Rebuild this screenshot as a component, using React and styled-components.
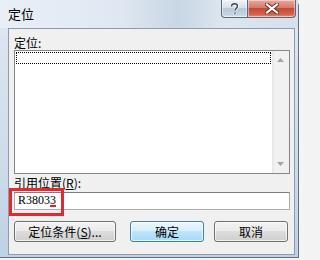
import React from "react";
import styled, { createGlobalStyle } from "styled-components";

const Global = createGlobalStyle`
  html, body { margin: 0; padding: 0; }
  body { background: #f3f3f3; font-family: "Noto Sans CJK SC", "Liberation Sans", sans-serif; }
`;

const Screen = styled.div`
  width: 305px;
  height: 260px;
  overflow: hidden;
  background: #f4f4f4;
`;

const Window = styled.div`
  width: 299px;
  height: 258px;
  box-sizing: border-box;
  border-right: 1px solid #5f6f84;
  border-bottom: 1px solid #5f6f84;
  border-top-right-radius: 6px;
  background: linear-gradient(180deg, #e4ecf5 0%, #dbe5f0 15%, #cfdceb 60%, #bfd1e6 100%);
  display: flex;
  flex-direction: column;
`;

const TitleBar = styled.div`
  height: 28px;
  display: flex;
  align-items: flex-start;
  background: linear-gradient(90deg, #e9eff7 0%, #dfe8f2 40%, #c9d6e4 60%, #dde6f0 75%, #d5e0ec 100%);
`;

const Title = styled.div`
  font-size: 13px;
  line-height: 16px;
  color: #000;
  padding: 6px 0 0 8px;
  flex: 1;
`;

const Captions = styled.div`
  display: flex;
  margin-right: 2px;
`;

const CapBtn = styled.div`
  width: ${(p) => p.$w}px;
  height: 18px;
  box-sizing: border-box;
  border: 1px solid #5b6676;
  border-top: none;
  border-left-width: ${(p) => (p.$first ? 1 : 0)}px;
  border-radius: ${(p) => (p.$first ? "0 0 0 4px" : "0 0 4px 0")};
  background: ${(p) =>
    p.$close
      ? "linear-gradient(180deg, #e9a99a 0%, #d8786a 45%, #c44a36 50%, #d2644e 85%, #e29a7c 100%)"
      : "linear-gradient(180deg, #eef3f8 0%, #d6e0ea 45%, #b9c8d8 50%, #c4d2e0 85%, #d8e3ee 100%)"};
  display: flex;
  align-items: center;
  justify-content: center;
  box-shadow: inset 0 0 0 1px rgba(255, 255, 255, 0.45);
`;

const Client = styled.div`
  position: relative;
  margin-left: 8px;
  width: 287px;
  height: 227px;
  box-sizing: border-box;
  border: 1px solid #8d9bad;
  background: #f0f0f0;
  padding: 0 5px;
  display: flex;
  flex-direction: column;
`;

const Label = styled.div`
  font-size: 12px;
  height: ${(p) => p.$h}px;
  line-height: ${(p) => p.$h}px;
  margin-top: ${(p) => p.$mt}px;
  color: #000;
  white-space: nowrap;
`;

const U = styled.span`
  text-decoration: underline;
  text-underline-offset: 1px;
`;

const ListBox = styled.div`
  width: 276px;
  height: 124px;
  box-sizing: border-box;
  border: 1px solid #828790;
  background: #fff;
  display: flex;
`;

const ListArea = styled.div`
  flex: 1;
  padding: 1px;
`;

const FocusRect = styled.div`
  height: 12px;
  box-sizing: border-box;
  border: 1px dotted #000;
`;

const ScrollBar = styled.div`
  width: 17px;
  background: linear-gradient(90deg, #e6e6e6 0%, #f2f2f2 20%, #f0f0f0 100%);
  display: flex;
  flex-direction: column;
  justify-content: space-between;
  align-items: center;
  padding: 7px 0;
  box-sizing: border-box;
`;

const Input = styled.div`
  width: 276px;
  height: 18px;
  box-sizing: border-box;
  margin-top: 1px;
  border: 1px solid #abadb3;
  border-top-color: #7a7d84;
  background: #fff;
  font-family: "Liberation Serif", "Times New Roman", serif;
  font-size: 12px;
  line-height: 15px;
  padding-left: 3px;
  color: #000;
`;

const Squiggle = styled.span`
  text-decoration: underline;
  text-decoration-color: #e02020;
  text-decoration-thickness: 2px;
  text-underline-offset: 1px;
`;

const Highlight = styled.div`
  position: absolute;
  left: 0;
  top: 159px;
  width: 55px;
  height: 28px;
  box-sizing: border-box;
  border: 3px solid #e5282c;
  pointer-events: none;
`;

const ButtonRow = styled.div`
  display: flex;
  margin-top: 11px;
`;

const Button = styled.div`
  width: ${(p) => p.$w}px;
  height: 21px;
  margin-left: ${(p) => p.$ml || 0}px;
  box-sizing: border-box;
  border: 1px solid ${(p) => (p.$default ? "#3c7fb1" : "#707070")};
  border-radius: 3px;
  background: ${(p) =>
    p.$default
      ? "linear-gradient(180deg, #eaf6fd 0%, #d9f0fc 45%, #bee6fd 50%, #a7d9f5 100%)"
      : "linear-gradient(180deg, #f2f2f2 0%, #ebebeb 45%, #dddddd 50%, #cfcfcf 100%)"};
  box-shadow: inset 0 0 0 1px rgba(255, 255, 255, 0.7);
  font-size: 12px;
  line-height: 19px;
  text-align: center;
  color: #000;
  white-space: nowrap;
`;

const Arrow = ({ up }) => (
  <svg width="7" height="4" viewBox="0 0 7 4">
    <path d={up ? "M0 4 L3.5 0 L7 4 Z" : "M0 0 L3.5 4 L7 0 Z"} fill="#a3a3a3" />
  </svg>
);

export default function App() {
  return (
    <Screen>
      <Global />
      <Window>
        <TitleBar>
          <Title>定位</Title>
          <Captions>
            <CapBtn $w={27} $first>
              <svg width="9" height="12" viewBox="0 0 9 12">
                <path
                  d="M1.5 3.5 C1.5 1.5 3 0.8 4.5 0.8 C6.3 0.8 7.5 1.8 7.5 3.3 C7.5 5 5 5.3 5 7.5 M5 9.5 L5 11"
                  fill="none"
                  stroke="#fff"
                  strokeWidth="3"
                />
                <path
                  d="M1.5 3.5 C1.5 1.5 3 0.8 4.5 0.8 C6.3 0.8 7.5 1.8 7.5 3.3 C7.5 5 5 5.3 5 7.5 M5 9.5 L5 11"
                  fill="none"
                  stroke="#3b4654"
                  strokeWidth="1.4"
                />
              </svg>
            </CapBtn>
            <CapBtn $w={48} $close>
              <svg width="14" height="11" viewBox="0 0 14 11">
                <path d="M2 1.5 L12 9.5 M12 1.5 L2 9.5" stroke="#6a2a22" strokeWidth="4" strokeLinecap="square" />
                <path d="M2 1.5 L12 9.5 M12 1.5 L2 9.5" stroke="#fff" strokeWidth="2.2" strokeLinecap="square" />
              </svg>
            </CapBtn>
          </Captions>
        </TitleBar>
        <Client>
          <Label $h={15} $mt={6}>定位:</Label>
          <ListBox>
            <ListArea>
              <FocusRect />
            </ListArea>
            <ScrollBar>
              <Arrow up />
              <Arrow />
            </ScrollBar>
          </ListBox>
          <Label $h={16} $mt={1}>
            引用位置(<U>R</U>):
          </Label>
          <Input>
            R3803<Squiggle>3</Squiggle>
          </Input>
          <ButtonRow>
            <Button $w={102}>
              定位条件(<U>S</U>)...
            </Button>
            <Button $w={74} $ml={14} $default>
              确定
            </Button>
            <Button $w={74} $ml={10}>
              取消
            </Button>
          </ButtonRow>
          <Highlight />
        </Client>
      </Window>
    </Screen>
  );
}
